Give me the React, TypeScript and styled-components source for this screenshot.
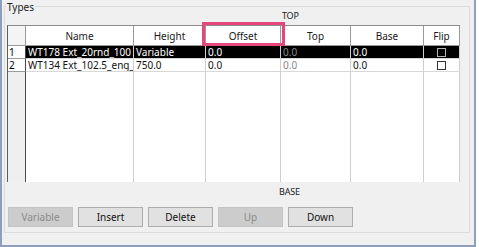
import React from "react";
import styled, { createGlobalStyle } from "styled-components";

const Global = createGlobalStyle`
  html, body {
    margin: 0;
    padding: 0;
    background: #ffffff;
  }
  body {
    font-family: "Noto Sans", "Liberation Sans", sans-serif;
    font-size: 10px;
    color: #000;
  }
`;

const Window = styled.div`
  width: 470px;
  height: 239px;
  background: #f0f0f0;
  border-left: 2px solid #8d9fbd;
  border-right: 2px solid #8d9fbd;
  border-bottom: 2px solid #8d9fbd;
  padding: 6px 0 0 2px;
  box-sizing: content-box;
`;

const Group = styled.fieldset`
  margin: 0;
  width: 466px;
  height: 227px;
  box-sizing: border-box;
  border: 1px solid #dcdcdc;
  padding: 0 0 0 2px;
  display: flex;
  flex-direction: column;
  position: relative;
`;

const Legend = styled.legend`
  position: absolute;
  top: -6px;
  left: 1px;
  padding: 0 1px;
  font-size: 10px;
  line-height: 12px;
  background: #f0f0f0;
  color: #222;
`;

const Caption = styled.div`
  padding-left: 275px;
  height: 18px;
  line-height: 18px;
  font-size: 9px;
  letter-spacing: -0.2px;
  color: #222;
`;

const Grid = styled.div`
  display: grid;
  grid-template-columns: 18px 108px 72px 75px 70px 73px 36px;
  grid-template-rows: 20px 13px 13px 1fr;
  width: 453px;
  height: 157px;
  box-sizing: border-box;
  border-top: 1px solid #8c8c8c;
  border-left: 1px solid #5e5e5e;
  background: #ffffff;
`;

const HeadCell = styled.div<{ $corner?: boolean }>`
  position: relative;
  box-sizing: border-box;
  background: ${({ $corner }) => ($corner ? "#f4f4f4" : "#ffffff")};
  border-right: 1px solid #9a9a9a;
  border-bottom: 1px solid #9a9a9a;
  display: flex;
  align-items: center;
  justify-content: center;
  font-size: 10px;
  color: #1a1a1a;
`;

const Highlight = styled.div`
  position: absolute;
  z-index: 2;
  top: -4px;
  left: -4px;
  right: -5px;
  bottom: -1px;
  border: 3px solid #e5467e;
  pointer-events: none;
`;

const RowNum = styled.div<{ $filler?: boolean }>`
  box-sizing: border-box;
  background: ${({ $filler }) => ($filler ? "#efefef" : "#ffffff")};
  border-right: 1px solid #4a4a4a;
  border-bottom: ${({ $filler }) => ($filler ? "none" : "1px solid #9a9a9a")};
  padding-left: 1px;
  font-size: 10px;
  line-height: 12px;
`;

const Cell = styled.div<{ $selected?: boolean; $muted?: boolean; $filler?: boolean }>`
  box-sizing: border-box;
  overflow: hidden;
  white-space: nowrap;
  padding-left: 2px;
  font-size: 10px;
  line-height: 12px;
  background: ${({ $selected }) => ($selected ? "#000000" : "#ffffff")};
  color: ${({ $selected, $muted }) =>
    $muted ? "#8a8a8a" : $selected ? "#ffffff" : "#111111"};
  border-right: 1px solid #cfcfcf;
  border-bottom: ${({ $filler }) => ($filler ? "none" : "1px solid #d8d8d8")};
`;

const CheckCell = styled(Cell)`
  display: flex;
  align-items: center;
  justify-content: center;
  padding-left: 0;
`;

const Check = styled.span<{ $selected?: boolean }>`
  width: 9px;
  height: 9px;
  box-sizing: border-box;
  border: 1px solid ${({ $selected }) => ($selected ? "#b5b5b5" : "#333333")};
  background: ${({ $selected }) => ($selected ? "#000" : "#fff")};
`;

const BaseCaption = styled(Caption)`
  height: 25px;
  line-height: 20px;
  padding-left: 272px;
`;

const Buttons = styled.div`
  display: flex;
  gap: 5px;
  padding-left: 1px;
`;

const Button = styled.button<{ $disabled?: boolean }>`
  width: 65px;
  height: 20px;
  padding: 0;
  font-family: "Noto Sans", "Liberation Sans", sans-serif;
  font-size: 10px;
  border: 1px solid ${({ $disabled }) => ($disabled ? "#c4c4c4" : "#adadad")};
  background: ${({ $disabled }) => ($disabled ? "#cccccc" : "#e1e1e1")};
  color: ${({ $disabled }) => ($disabled ? "#8a8a8a" : "#111111")};
`;

type Row = {
  n: number;
  name: string;
  height: string;
  offset: string;
  top: string;
  base: string;
  selected?: boolean;
};

const rows: Row[] = [
  { n: 1, name: "WT178 Ext_20rnd_100", height: "Variable", offset: "0.0", top: "0.0", base: "0.0", selected: true },
  { n: 2, name: "WT134 Ext_102.5_eng_", height: "750.0", offset: "0.0", top: "0.0", base: "0.0" },
];

const headers = ["Name", "Height", "Offset", "Top", "Base", "Flip"];

export default function App() {
  return (
    <>
      <Global />
      <Window>
        <Group>
          <Legend>Types</Legend>
          <Caption>TOP</Caption>
          <Grid>
            <HeadCell $corner />
            {headers.map((h) => (
              <HeadCell key={h}>
                {h}
                {h === "Offset" && <Highlight />}
              </HeadCell>
            ))}
            {rows.map((r) => (
              <React.Fragment key={r.n}>
                <RowNum>{r.n}</RowNum>
                <Cell $selected={r.selected}>{r.name}</Cell>
                <Cell $selected={r.selected}>{r.height}</Cell>
                <Cell $selected={r.selected}>{r.offset}</Cell>
                <Cell $selected={r.selected} $muted>{r.top}</Cell>
                <Cell $selected={r.selected}>{r.base}</Cell>
                <CheckCell $selected={r.selected}>
                  <Check $selected={r.selected} />
                </CheckCell>
              </React.Fragment>
            ))}
            <RowNum $filler />
            <Cell $filler />
            <Cell $filler />
            <Cell $filler />
            <Cell $filler />
            <Cell $filler />
            <Cell $filler />
          </Grid>
          <BaseCaption>BASE</BaseCaption>
          <Buttons>
            <Button $disabled>Variable</Button>
            <Button>Insert</Button>
            <Button>Delete</Button>
            <Button $disabled>Up</Button>
            <Button>Down</Button>
          </Buttons>
        </Group>
      </Window>
    </>
  );
}
